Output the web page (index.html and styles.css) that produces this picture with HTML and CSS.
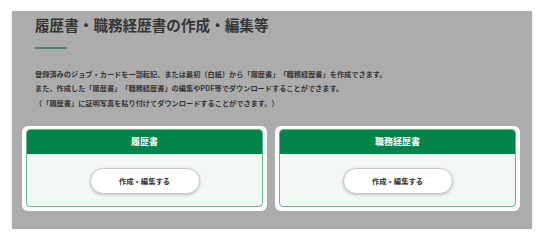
FILE: index.html
```html
<!DOCTYPE html>
<html lang="ja">
<head>
<meta charset="utf-8">
<link rel="stylesheet" href="styles.css">
</head>
<body>
<div class="page">
  <section class="panel">
    <h1 class="title">履歴書・職務経歴書の作成・編集等</h1>
    <div class="rule"></div>
    <p class="desc">登録済みのジョブ・カードを一部転記、または最初（白紙）から「履歴書」「職務経歴書」を作成できます。<br>また、作成した「履歴書」「職務経歴書」の編集やPDF等でダウンロードすることができます。<br>（「履歴書」に証明写真を貼り付けてダウンロードすることができます。）</p>
    <div class="cards">
      <div class="card-wrap">
        <div class="card">
          <div class="card-head">履歴書</div>
          <div class="card-body"><button class="btn">作成・編集する</button></div>
        </div>
      </div>
      <div class="card-wrap">
        <div class="card">
          <div class="card-head">職務経歴書</div>
          <div class="card-body"><button class="btn">作成・編集する</button></div>
        </div>
      </div>
    </div>
  </section>
</div>
</body>
</html>
```
FILE: styles.css
```css
html, body {
  margin: 0;
  padding: 0;
  background: #ffffff;
}
body {
  font-family: "Noto Sans CJK JP", "Noto Sans", sans-serif;
  text-spacing-trim: space-all;
}
.page {
  padding: 11px 12px 0 12px;
}
.panel {
  width: 520px;
  height: 218px;
  box-sizing: border-box;
  background: #acacac;
  padding: 4px 12px 0 10px;
  box-shadow: 0 2px 4px rgba(0, 0, 0, 0.12);
}
.title {
  margin: 0 0 0 13px;
  font-size: 14.6px;
  line-height: 20px;
  font-weight: 700;
  color: #363636;
}
.rule {
  margin: 12px 0 0 13px;
  width: 32px;
  height: 2px;
  background: #4d8a69;
}
.desc {
  margin: 18px 0 0 13px;
  font-size: 7.2px;
  line-height: 14.4px;
  font-weight: 700;
  color: #353535;
}
.cards {
  display: flex;
  gap: 8px;
  margin-top: 16px;
}
.card-wrap {
  flex: 1;
  background: #ffffff;
  border-radius: 6px;
  padding: 3px 4px 4px 4px;
}
.card {
  border: 1px solid #5fbb8e;
  border-radius: 4px;
  overflow: hidden;
  background: #f3f8f5;
}
.card-head {
  background: #00844a;
  color: #ffffff;
  height: 25px;
  line-height: 25px;
  margin: -1px -1px 0 -1px;
  text-align: center;
  font-size: 9px;
  font-weight: 700;
}
.card-body {
  display: flex;
  justify-content: center;
  padding: 14px 0 12px 0;
}
.btn {
  width: 110px;
  height: 26px;
  border: 1px solid #c9c9c9;
  border-radius: 13px;
  background: #ffffff;
  box-shadow: 0 1px 3px rgba(0, 0, 0, 0.22);
  font-family: "Noto Sans CJK JP", "Noto Sans", sans-serif;
  text-spacing-trim: space-all;
  font-size: 7.3px;
  font-weight: 700;
  color: #333333;
  padding: 0;
}
```
